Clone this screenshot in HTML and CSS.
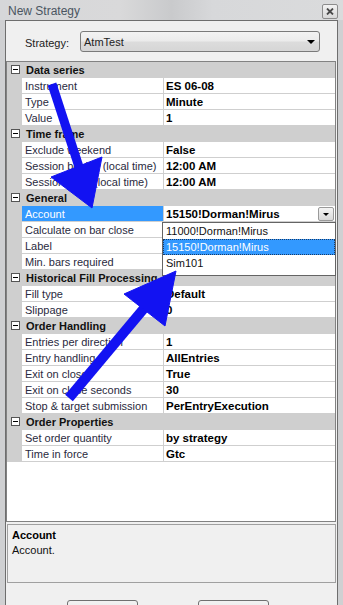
FILE: index.html
```html
<!DOCTYPE html>
<html>
<head>
<meta charset="utf-8">
<link rel="stylesheet" href="styles.css">
</head>
<body>
<div class="window">
  <div class="titlebar">
    <span class="title">New Strategy</span>
    <span class="close"><svg width="8" height="7" viewBox="0 0 8 7"><path d="M1 0.5 L7 6.5 M7 0.5 L1 6.5" stroke="#4a4a4a" stroke-width="1.8"/></svg></span>
  </div>
  <div class="client">
    <div class="strategy-row">
      <span class="strategy-label">Strategy:</span>
      <div class="combo"><span>AtmTest</span><span class="tri"></span></div>
    </div>
    <div class="grid">
      <div class="cat"><span class="box"></span><span>Data series</span></div>
      <div class="prop"><span class="gut"></span><span class="name">Instrument</span><span class="value">ES 06-08</span></div>
      <div class="prop"><span class="gut"></span><span class="name">Type</span><span class="value">Minute</span></div>
      <div class="prop"><span class="gut"></span><span class="name">Value</span><span class="value">1</span></div>
      <div class="cat"><span class="box"></span><span>Time frame</span></div>
      <div class="prop"><span class="gut"></span><span class="name">Exclude weekend</span><span class="value">False</span></div>
      <div class="prop"><span class="gut"></span><span class="name">Session begins (local time)</span><span class="value">12:00 AM</span></div>
      <div class="prop"><span class="gut"></span><span class="name">Session ends (local time)</span><span class="value">12:00 AM</span></div>
      <div class="cat"><span class="box"></span><span>General</span></div>
      <div class="prop selected"><span class="gut"></span><span class="name">Account</span><span class="value">15150!Dorman!Mirus<span class="ddbtn"><span class="tri small"></span></span></span></div>
      <div class="prop"><span class="gut"></span><span class="name">Calculate on bar close</span><span class="value"></span></div>
      <div class="prop"><span class="gut"></span><span class="name">Label</span><span class="value"></span></div>
      <div class="prop"><span class="gut"></span><span class="name">Min. bars required</span><span class="value"></span></div>
      <div class="cat"><span class="box"></span><span>Historical Fill Processing</span></div>
      <div class="prop"><span class="gut"></span><span class="name">Fill type</span><span class="value">Default</span></div>
      <div class="prop"><span class="gut"></span><span class="name">Slippage</span><span class="value">0</span></div>
      <div class="cat"><span class="box"></span><span>Order Handling</span></div>
      <div class="prop"><span class="gut"></span><span class="name">Entries per direction</span><span class="value">1</span></div>
      <div class="prop"><span class="gut"></span><span class="name">Entry handling</span><span class="value">AllEntries</span></div>
      <div class="prop"><span class="gut"></span><span class="name">Exit on close</span><span class="value">True</span></div>
      <div class="prop"><span class="gut"></span><span class="name">Exit on close seconds</span><span class="value">30</span></div>
      <div class="prop"><span class="gut"></span><span class="name">Stop &amp; target submission</span><span class="value">PerEntryExecution</span></div>
      <div class="cat"><span class="box"></span><span>Order Properties</span></div>
      <div class="prop"><span class="gut"></span><span class="name">Set order quantity</span><span class="value">by strategy</span></div>
      <div class="prop"><span class="gut"></span><span class="name">Time in force</span><span class="value">Gtc</span></div>
      <div class="dropdown">
        <div class="item">11000!Dorman!Mirus</div>
        <div class="item sel">15150!Dorman!Mirus</div>
        <div class="item">Sim101</div>
      </div>
    </div>
    <div class="desc">
      <div class="desc-title">Account</div>
      <div class="desc-text">Account.</div>
    </div>
    <div class="buttons">
      <span class="btn"></span>
      <span class="btn"></span>
    </div>
  </div>
  <svg class="arrows" width="343" height="605" viewBox="0 0 343 605">
    <g fill="#1212f2" stroke="#1212f2">
      <line x1="52" y1="84" x2="80" y2="170" stroke-width="9"/>
      <polygon points="51,177 102,157 92,208" stroke-width="1"/>
      <line x1="69" y1="398" x2="146" y2="306" stroke-width="10"/>
      <polygon points="124,294 165,326 176,271" stroke-width="1"/>
    </g>
  </svg>
</div>
</body>
</html>
```
FILE: styles.css
```css
* { box-sizing: border-box; }
html, body { margin: 0; padding: 0; }
body {
  width: 343px;
  height: 605px;
  overflow: hidden;
  font-family: "Liberation Sans", Arial, sans-serif;
  font-size: 11px;
  color: #222;
}
.window {
  position: relative;
  width: 343px;
  height: 605px;
  background: #cfd0d2;
  display: flex;
  flex-direction: column;
  overflow: hidden;
}
.titlebar {
  flex: none;
  height: 20px;
  display: flex;
  align-items: center;
  justify-content: space-between;
  padding: 0 5px 0 8px;
  background: linear-gradient(90deg, #d6d7d9 0%, #d9d9da 35%, #c9cacc 50%, #d7d8da 62%, #dadbdc 100%);
}
.title {
  font-size: 12px;
  color: #4a5561;
  margin-top: 2px;
}
.close {
  width: 16px;
  height: 15px;
  margin-top: 2px;
  border: 1px solid #8c8c8c;
  border-radius: 2px;
  background: linear-gradient(#f2f2f2, #d8d8d8);
  display: flex;
  align-items: center;
  justify-content: center;
}
.client {
  flex: 1;
  min-height: 0;
  overflow: hidden;
  margin: 0 5px;
  border: 1px solid #6e6e6e;
  border-bottom: none;
  background: #f0f0f0;
  display: flex;
  flex-direction: column;
}
.strategy-row {
  flex: none;
  display: flex;
  align-items: center;
  padding: 10px 0 0 19px;
  margin-bottom: 9px;
}
.strategy-label {
  width: 55px;
  color: #222;
  padding-top: 2px;
}
.combo {
  width: 240px;
  height: 21px;
  border: 1px solid #7a7a7a;
  border-radius: 3px;
  background: linear-gradient(#f3f3f3 0%, #ebebeb 48%, #dcdcdc 52%, #d6d6d6 100%);
  display: flex;
  align-items: center;
  justify-content: space-between;
  padding: 1px 4px 0 3px;
}
.tri {
  width: 0;
  height: 0;
  border-left: 4px solid transparent;
  border-right: 4px solid transparent;
  border-top: 4px solid #000;
}
.grid {
  flex: none;
  position: relative;
  height: 461px;
  margin-right: 1px;
  border: 1px solid #828282;
  background: #fff;
}
.cat, .prop {
  display: flex;
  height: 16px;
}
.cat {
  background: #cfcfcf;
  align-items: flex-start;
  font-weight: bold;
  color: #111;
  line-height: 13px;
  padding-top: 2px;
}
.box {
  width: 9px;
  height: 9px;
  margin: 1px 6px 0 4px;
  border: 1px solid #555;
  background: #fff;
  position: relative;
}
.box::after {
  content: "";
  position: absolute;
  left: 1px;
  top: 3px;
  width: 5px;
  height: 1px;
  background: #000;
}
.gut {
  width: 15px;
  background: #cfcfcf;
  flex: none;
}
.name {
  width: 142px;
  flex: none;
  border-right: 1px solid #cfcfcf;
  border-bottom: 1px solid #cfcfcf;
  padding: 2px 0 0 3px;
  line-height: 13px;
  color: #2a2a40;
  white-space: nowrap;
  overflow: hidden;
}
.value {
  flex: 1;
  border-bottom: 1px solid #cfcfcf;
  padding: 2px 0 0 2px;
  line-height: 13px;
  font-weight: bold;
  font-size: 11.5px;
  color: #000;
  display: flex;
  justify-content: space-between;
  align-items: flex-start;
  white-space: nowrap;
}
.selected .name {
  background: #3399ff;
  color: #fff;
}
.ddbtn {
  width: 16px;
  height: 14px;
  margin: -1px 1px 0 0;
  border: 1px solid #9a9a9a;
  border-radius: 2px;
  background: linear-gradient(#f4f4f4, #d9d9d9);
  display: flex;
  align-items: center;
  justify-content: center;
}
.tri.small {
  border-left-width: 3px;
  border-right-width: 3px;
  border-top-width: 3px;
}
.dropdown {
  position: absolute;
  left: 155px;
  top: 160px;
  width: 174px;
  height: 54px;
  border: 1px solid #646464;
  background: #fff;
}
.item {
  height: 16px;
  line-height: 13px;
  padding: 2px 0 0 3px;
  color: #111;
}
.item.sel {
  background: #3399ff;
  color: #fff;
  outline: 1px dotted #1a3b66;
  outline-offset: -1px;
}
.desc {
  flex: none;
  margin: 2px 1px 0 1px;
  height: 59px;
  border: 1px solid #a0a0a0;
  background: #f0f0f0;
  padding: 3px 0 0 4px;
}
.desc-title {
  font-weight: bold;
  color: #000;
  line-height: 14px;
}
.desc-text {
  color: #111;
  line-height: 16px;
}
.buttons {
  flex: none;
  display: flex;
  gap: 60px;
  padding: 17px 0 0 61px;
}
.btn {
  width: 71px;
  height: 24px;
  border: 1px solid #707070;
  border-radius: 3px;
  background: linear-gradient(#f2f2f2, #e3e3e3);
}
.arrows {
  position: absolute;
  left: 0;
  top: 0;
  pointer-events: none;
}
```
